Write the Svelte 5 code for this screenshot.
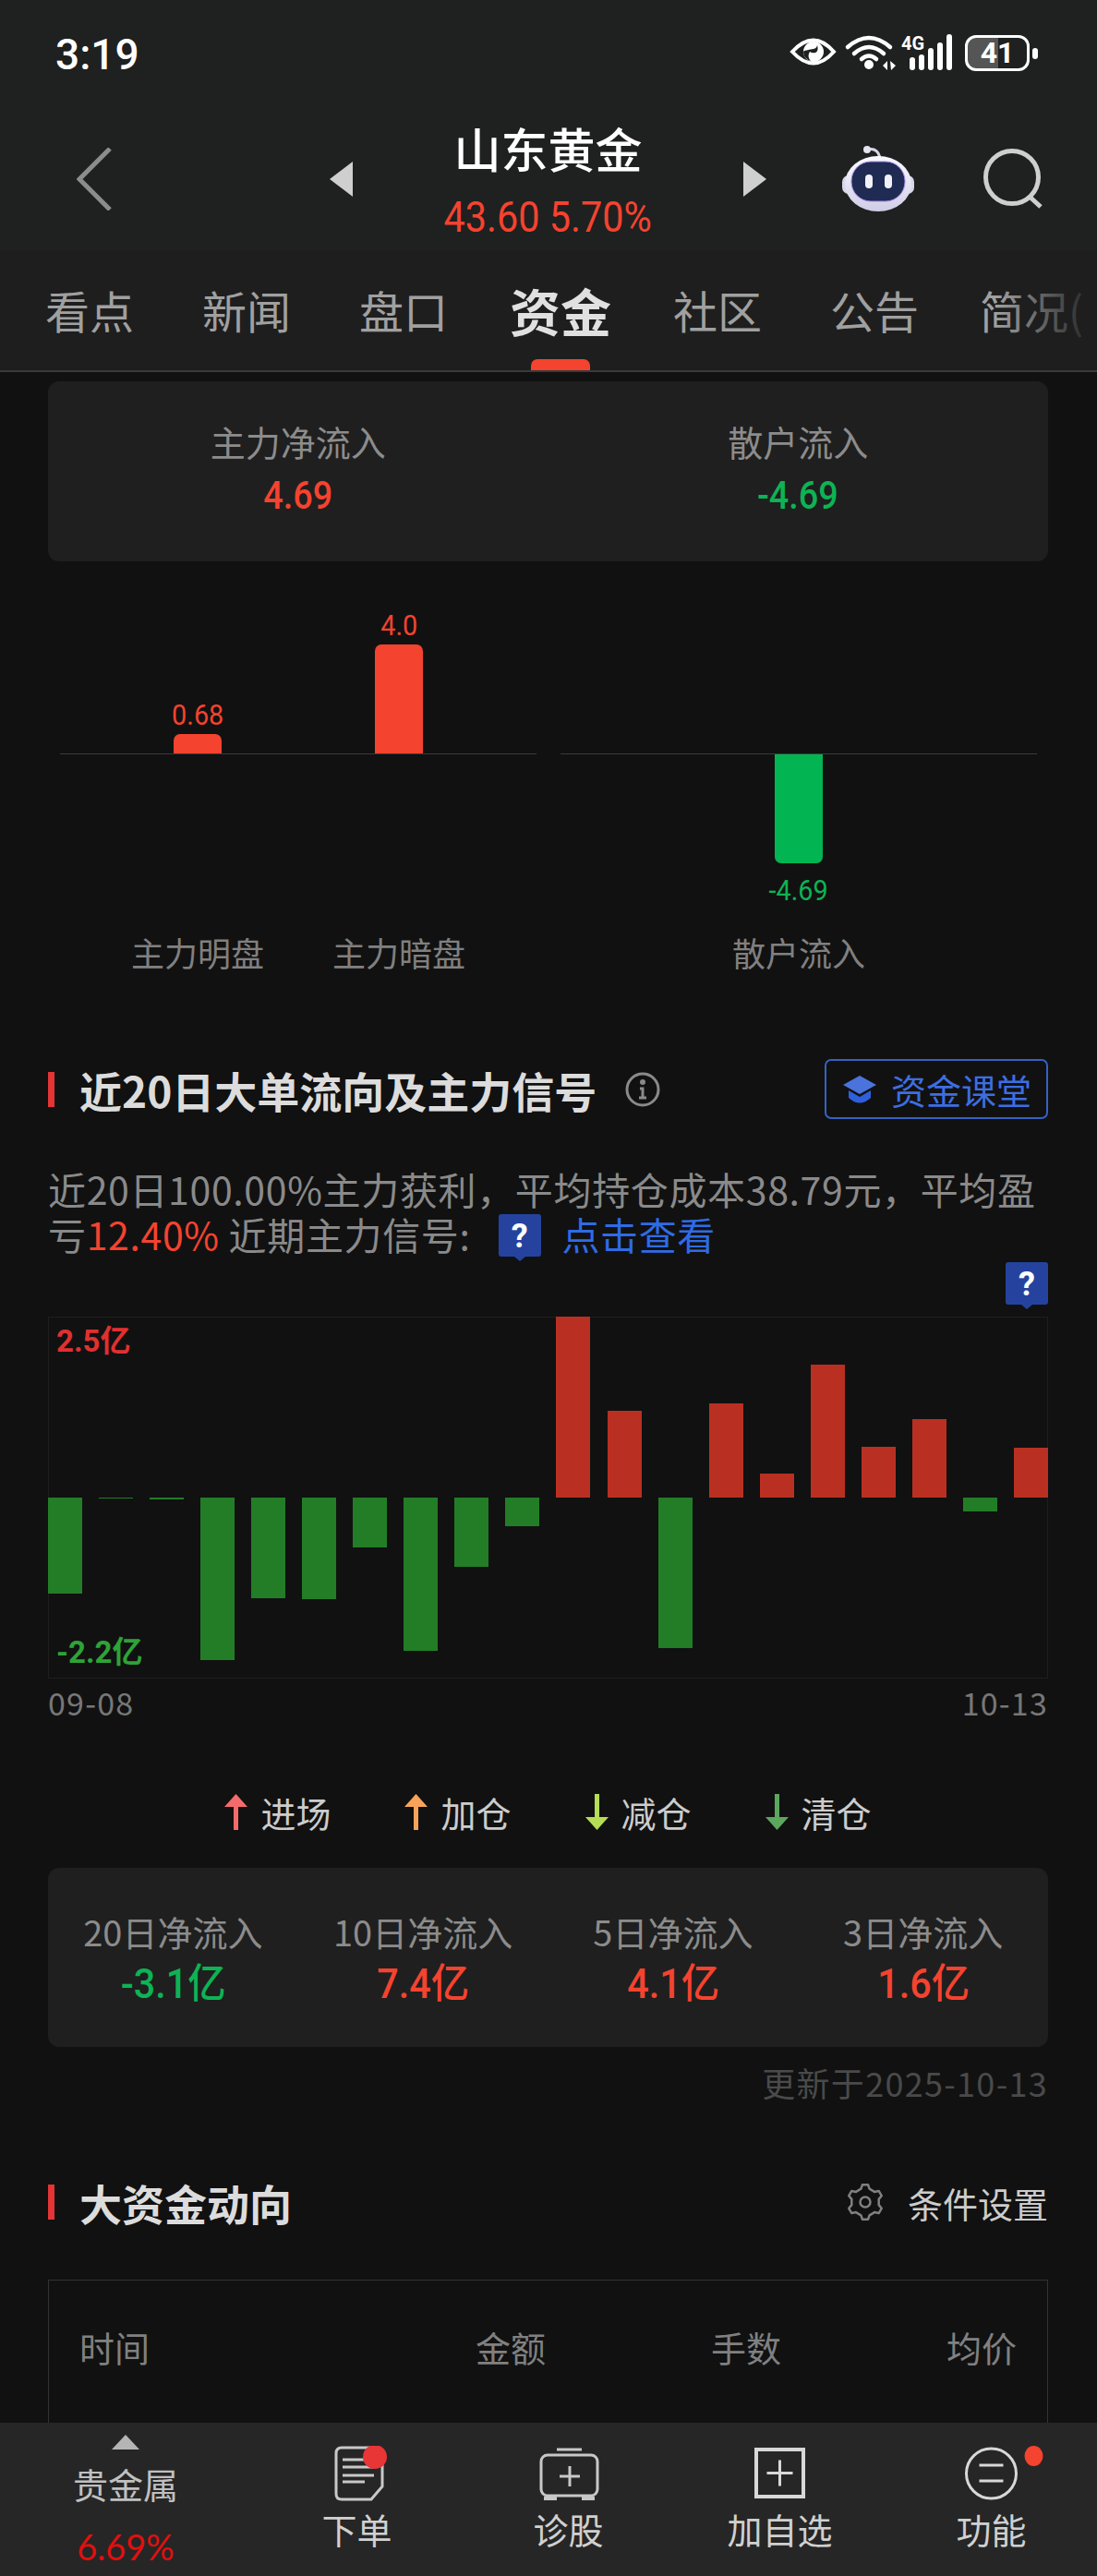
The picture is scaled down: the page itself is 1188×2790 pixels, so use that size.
<script>
  const tabs = ['看点', '新闻', '盘口', '资金', '社区', '公告', '简况('];

  const flowPanels = [
    { cols: [
      { name: '主力明盘', value: '0.68', h: 21, up: true },
      { name: '主力暗盘', value: '4.0', h: 118, up: true }
    ] },
    { cols: [{ name: '散户流入', value: '-4.69', h: 118, up: false }] }
  ];

  // positive = inflow, negative = outflow (px at chart scale)
  const bars = [-104, -1, -1.5, -176, -109, -110, -54, -166, -75, -31, 196, 94, -163, 102, 26, 144, 55, 85, -15, 54];

  const legend = [
    { label: '进场', color: '#f46b6b', up: true },
    { label: '加仓', color: '#f7a45a', up: true },
    { label: '减仓', color: '#b5dd55', up: false },
    { label: '清仓', color: '#5ba75d', up: false }
  ];

  const netFlows = [
    { label: '20日净流入', value: '-3.1亿', up: false },
    { label: '10日净流入', value: '7.4亿', up: true },
    { label: '5日净流入', value: '4.1亿', up: true },
    { label: '3日净流入', value: '1.6亿', up: true }
  ];

  function gearPath(cx, cy, outer, inner, teeth) {
    const pts = [];
    const step = (Math.PI * 2) / teeth;
    for (let i = 0; i < teeth; i++) {
      const a = i * step - Math.PI / 2;
      const spots = [[-0.3, inner], [-0.15, outer], [0.15, outer], [0.3, inner]];
      for (const [off, r] of spots) {
        const t = a + off * step;
        pts.push((cx + Math.cos(t) * r).toFixed(1) + ' ' + (cy + Math.sin(t) * r).toFixed(1));
      }
    }
    return 'M' + pts.join('L') + 'Z';
  }
</script>

<div class="app">
  <header class="top">
    <div class="status">
      <span class="time">3:19</span>
      <svg class="status-icons" width="176" height="40" viewBox="0 0 176 40" fill="none">
        <path d="M2 19Q25-6 47 19Q25 44 2 19Z" stroke="#fff" stroke-width="4" fill="#1f2020" />
        <circle cx="25" cy="19" r="11" fill="#fff" />
        <path d="M14 19a11 11 0 0 0 8 10c-3-3-3-7-1-10a7 7 0 0 0 6 1c3-1 3-5 2-8a5 5 0 0 1-4 4c-4 1-9 1-11 3Z" fill="#1f2020" />
        <path d="M62 14Q85-6 108 14" stroke="#fff" stroke-width="4.5" stroke-linecap="round" />
        <path d="M69 21Q85 7 101 21" stroke="#fff" stroke-width="4.5" stroke-linecap="round" />
        <path d="M77 27Q85 20 93 27" stroke="#fff" stroke-width="4.5" stroke-linecap="round" />
        <circle cx="85" cy="33" r="5" fill="#fff" />
        <path d="M100 34l5-5v10zM108 29l6 5-5 5z" fill="#fff" />
        <text x="120" y="17" class="g4">4G</text>
        <rect x="129" y="25" width="6" height="14" rx="3" fill="#fff" />
        <rect x="139" y="22" width="6" height="17" rx="3" fill="#fff" />
        <rect x="149" y="15" width="6" height="24" rx="3" fill="#fff" />
        <rect x="159" y="9" width="6" height="30" rx="3" fill="#fff" />
        <rect x="169" y="0" width="6" height="39" rx="3" fill="#fff" />
      </svg>
      <div class="battery"><span>41</span></div>
      <i class="battery-nub"></i>
    </div>

    <div class="nav">
      <svg class="chevron" width="38" height="68" viewBox="0 0 38 68" fill="none">
        <path d="M36 1L3 34L36 67" stroke="#8c8c8c" stroke-width="5" />
      </svg>
      <svg class="tri-left" width="25" height="38" viewBox="0 0 25 38"><path d="M25 0V38L0 19Z" fill="#cfcfcf" /></svg>
      <div class="stock">
        <div class="stock-name">山东黄金</div>
        <div class="stock-price"><span class="num">43.60 5.70%</span></div>
      </div>
      <svg width="25" height="38" viewBox="0 0 25 38"><path d="M0 0V38L25 19Z" fill="#cfcfcf" /></svg>
      <svg class="robot" width="78" height="72" viewBox="0 0 78 72" fill="none">
        <defs>
          <linearGradient id="shell" x1="0" y1="0" x2="0" y2="1">
            <stop offset="0" stop-color="#fbfaff" />
            <stop offset="1" stop-color="#cfcde6" />
          </linearGradient>
        </defs>
        <path d="M28 4C36 2 40 7 41 14" stroke="#d8d6e6" stroke-width="3" />
        <circle cx="27" cy="4" r="4" fill="#e6e4f0" />
        <rect x="0" y="32" width="78" height="20" rx="7" fill="#d9d7ea" />
        <ellipse cx="39" cy="41" rx="36" ry="30" fill="url(#shell)" />
        <rect x="10" y="17" width="58" height="43" rx="21" fill="#1f2b52" stroke="#a98be8" stroke-width="1" />
        <rect x="25" y="31" width="8" height="15" rx="4" fill="#f2f1fa" />
        <rect x="46" y="31" width="8" height="15" rx="4" fill="#f2f1fa" />
      </svg>
      <svg class="search" width="66" height="66" viewBox="0 0 66 66" fill="none">
        <circle cx="31" cy="31" r="28.5" stroke="#cfcfcf" stroke-width="5" />
        <path d="M50 52L62 63" stroke="#cfcfcf" stroke-width="5" />
      </svg>
    </div>
  </header>

  <nav class="tabs">
    {#each tabs as tab}
      <div class="tab" class:active={tab === '资金'}>
        <span>{tab}</span>
        {#if tab === '资金'}<i class="tab-mark"></i>{/if}
      </div>
    {/each}
  </nav>

  <main class="main">
    <section class="card split">
      <div class="stat">
        <div class="stat-label">主力净流入</div>
        <div class="stat-value red"><span class="num">4.69</span></div>
      </div>
      <div class="stat">
        <div class="stat-label">散户流入</div>
        <div class="stat-value green"><span class="num">-4.69</span></div>
      </div>
    </section>

    <section class="flow">
      {#each flowPanels as panel}
        <div class="panel">
          <div class="zone-up">
            {#each panel.cols as col}
              <div class="slot">
                {#if col.up}
                  <span class="bar-val red num">{col.value}</span>
                  <i class="bar-up" style="height: {col.h}px"></i>
                {/if}
              </div>
            {/each}
          </div>
          <div class="zone-down">
            {#each panel.cols as col}
              <div class="slot">
                {#if !col.up}
                  <i class="bar-down" style="height: {col.h}px"></i>
                  <span class="bar-val green below num">{col.value}</span>
                {/if}
              </div>
            {/each}
          </div>
          <div class="names">
            {#each panel.cols as col}
              <div class="slot">{col.name}</div>
            {/each}
          </div>
        </div>
      {/each}
    </section>

    <div class="head first">
      <i class="head-bar"></i>
      <h2>近20日大单流向及主力信号</h2>
      <svg class="info" width="38" height="38" viewBox="0 0 38 38" fill="none" stroke="#8a8a8a" stroke-width="3">
        <circle cx="19" cy="19" r="17" />
        <circle cx="19" cy="11" r="3" fill="#8a8a8a" stroke="none" />
        <path d="M16 18h3v10M15 28h8" />
      </svg>
      <div class="class-btn">
        <svg width="36" height="32" viewBox="0 0 36 32">
          <path d="M18 1L36 11L18 21L0 11Z" fill="#4a74dc" />
          <path d="M6 17L18 24L30 17V25Q18 36 6 25Z" fill="#2f5fdc" />
        </svg>
        <span>资金课堂</span>
      </div>
    </div>

    <p class="summary">近20日100.00%主力获利，平均持仓成本38.79元，平均盈亏<span class="red">12.40%</span> 近期主力信号: <svg class="q inline" width="46" height="51" viewBox="0 0 46 51"><path d="M3 0H43Q46 0 46 3V43Q46 46 43 46H29L23 51L17 46H3Q0 46 0 43V3Q0 0 3 0Z" fill="#25439e" /><text x="23" y="36" class="q-mark">?</text></svg><span class="link">点击查看</span></p>

    <div class="signal-row">
      <svg class="q" width="46" height="51" viewBox="0 0 46 51"><path d="M3 0H43Q46 0 46 3V43Q46 46 43 46H29L23 51L17 46H3Q0 46 0 43V3Q0 0 3 0Z" fill="#25439e" /><text x="23" y="36" class="q-mark">?</text></svg>
    </div>

    <div class="chart">
      <span class="chart-max">2.5亿</span>
      <span class="chart-min">-2.2亿</span>
      {#each bars as v}
        <div class="chart-col">
          <div class="chart-up">{#if v > 0}<i style="height: {v}px"></i>{/if}</div>
          <div class="chart-down">{#if v < 0}<i style="height: {-v}px"></i>{/if}</div>
        </div>
      {/each}
    </div>

    <div class="dates"><span>09-08</span><span>10-13</span></div>

    <div class="legend">
      {#each legend as item}
        <div class="legend-item">
          <svg width="25" height="39" viewBox="0 0 25 39" fill={item.color}>
            {#if item.up}
              <path d="M12.5 0L25 14H15V39H10V14H0Z" />
            {:else}
              <path d="M12.5 39L25 25H15V0H10V25H0Z" />
            {/if}
          </svg>
          <span>{item.label}</span>
        </div>
      {/each}
    </div>

    <section class="card net">
      {#each netFlows as item}
        <div class="stat">
          <div class="stat-label">{item.label}</div>
          <div class="stat-value" class:red={item.up} class:green={!item.up}><span class="num">{item.value}</span></div>
        </div>
      {/each}
    </section>

    <div class="updated">更新于2025-10-13</div>

    <div class="head second">
      <i class="head-bar"></i>
      <h2>大资金动向</h2>
      <div class="settings">
        <svg width="40" height="40" viewBox="0 0 40 40" fill="none" stroke="#808080" stroke-width="2.5" stroke-linejoin="round">
          <path d={gearPath(20, 20, 19, 15, 6)} />
          <circle cx="20" cy="20" r="5.5" />
        </svg>
        <span>条件设置</span>
      </div>
    </div>

    <div class="table">
      <div class="table-head">
        <span>时间</span>
        <span>金额</span>
        <span>手数</span>
        <span>均价</span>
      </div>
    </div>
  </main>

  <footer class="bottom">
    <div class="sector">
      <i class="sector-tri"></i>
      <div class="sector-name">贵金属</div>
      <div class="sector-pct">6.69%</div>
    </div>
    <div class="action">
      <svg width="80" height="60" viewBox="0 0 80 60" fill="none" stroke="#c8c8c8" stroke-width="3">
        <path d="M23 2H61Q67 2 67 8V44L55 58H23Q17 58 17 52V8Q17 2 23 2Z" />
        <path d="M24 15H58M24 23H58M24 32H58M24 39H48" />
        <ellipse cx="59" cy="12" rx="13" ry="13" fill="#e83535" stroke="none" />
      </svg>
      <span>下单</span>
    </div>
    <div class="action">
      <svg width="80" height="60" viewBox="0 0 80 60" fill="none" stroke="#c8c8c8" stroke-width="3">
        <path d="M27 4H54" />
        <rect x="10" y="10" width="61" height="44" rx="7" />
        <path d="M30 33H52M41 22V44" />
        <path d="M13 55H27V59H13ZM54 55H68V59H54Z" fill="#c8c8c8" stroke="none" />
      </svg>
      <span>诊股</span>
    </div>
    <div class="action">
      <svg width="80" height="60" viewBox="0 0 80 60" fill="none" stroke="#d8d8d8">
        <rect x="14" y="4" width="51" height="51" stroke-width="4" />
        <path d="M25.5 29.5H53.5M39.5 15.5V43.5" stroke-width="3" />
      </svg>
      <span>加自选</span>
    </div>
    <div class="action">
      <svg class="overflow" width="80" height="60" viewBox="0 0 80 60" fill="none" stroke="#d8d8d8" stroke-width="3">
        <ellipse cx="39.5" cy="30" rx="27" ry="27" />
        <path d="M26.5 21H52.5M26.5 38H52.5" />
        <ellipse cx="85.5" cy="11" rx="10" ry="11" fill="#f4432f" stroke="none" />
      </svg>
      <span>功能</span>
    </div>
  </footer>
</div>

<style>
  :global(body) {
    margin: 0;
    background: #111;
  }
  .app {
    width: 1188px;
    height: 2790px;
    display: flex;
    flex-direction: column;
    overflow: hidden;
    background: #111;
    font-family: "Noto Sans CJK SC", sans-serif;
  }
  .red { color: #f4432f; }
  .green { color: #0db354; }
  /* the app's numerals are a narrow face, Roboto squeezed comes closest */
  .num {
    display: inline-block;
    transform: scaleX(0.9);
  }

  /* header */
  .top { background: #1f2020; height: 272px; }
  .status {
    height: 108px;
    display: flex;
    align-items: flex-start;
    padding-left: 60px;
  }
  .time {
    font: 500 46px/46px Roboto, sans-serif;
    color: #fff;
    margin-top: 36px;
    width: 796px;
  }
  .status-icons { margin-top: 37px; overflow: visible; }
  .g4 { font: 700 20px Roboto, sans-serif; fill: #fff; }
  .battery {
    box-sizing: border-box;
    width: 70px;
    height: 39px;
    margin: 38px 0 0 13px;
    border: 3px solid #fff;
    border-radius: 12px;
    background: linear-gradient(to right, #555 51%, transparent 51%);
    display: flex;
    align-items: center;
    justify-content: center;
    color: #fff;
    font: 700 32px/33px Roboto, sans-serif;
  }
  .battery-nub {
    width: 6px;
    height: 12px;
    margin: 52px 0 0 3px;
    background: #fff;
    border-radius: 3px;
  }
  .nav {
    box-sizing: border-box;
    height: 164px;
    padding: 8px 0 0 83px;
    display: flex;
    align-items: center;
  }
  .tri-left { margin-left: 236px; }
  .stock {
    width: 423px;
    text-align: center;
  }
  .stock-name {
    color: #fff;
    font-size: 51px;
    font-weight: 500;
    line-height: 64px;
    margin-top: -2px;
  }
  .stock-price {
    color: #f4432f;
    font: 46px/48px Roboto, sans-serif;
    margin-top: 19px;
  }
  .robot { margin-left: 82px; }
  .search { margin-left: 75px; }

  /* tabs */
  .tabs {
    position: relative;
    box-sizing: border-box;
    height: 131px;
    padding-left: 12px;
    display: flex;
    overflow: hidden;
    background: #1e1e1e;
    border-bottom: 2px solid #3a3a3a;
  }
  .tabs::after {
    content: "";
    position: absolute;
    top: 0;
    right: 0;
    bottom: 0;
    width: 110px;
    background: linear-gradient(to right, rgba(30, 30, 30, 0), #1e1e1e);
  }
  .tab {
    flex: 0 0 170px;
    display: flex;
    flex-direction: column;
    align-items: center;
    padding-top: 37px;
    font-size: 48px;
    line-height: 52px;
    color: #a0a0a0;
    white-space: nowrap;
  }
  .tab.active {
    font-size: 55px;
    font-weight: 700;
    color: #e0e0e0;
  }
  .tab-mark {
    width: 64px;
    height: 13px;
    margin-top: 28px;
    background: #f4432f;
    border-radius: 7px 7px 0 0;
  }

  /* content */
  .main {
    flex: 1;
    min-height: 0;
    overflow: hidden;
    padding: 10px 53px 0 52px;
  }
  .card {
    background: #1f1f1f;
    border-radius: 12px;
    display: grid;
  }
  .split {
    height: 195px;
    grid-template-columns: 1fr 1fr;
    padding-top: 39px;
    box-sizing: border-box;
  }
  .stat { text-align: center; }
  .stat-label {
    font-size: 38px;
    line-height: 52px;
    color: #8c8c8c;
  }
  .stat-value {
    font: 500 42px/52px Roboto, "Noto Sans CJK SC", sans-serif;
    margin-top: 7px;
  }

  .flow {
    display: grid;
    grid-template-columns: 516px 516px;
    column-gap: 26px;
    padding: 32px 13px 0;
  }
  .zone-up, .zone-down, .names { display: flex; justify-content: center; }
  .zone-up {
    height: 177px;
    border-bottom: 1px solid #3a3a3a;
    box-sizing: border-box;
  }
  .panel:first-child .zone-up,
  .panel:first-child .zone-down,
  .panel:first-child .names {
    justify-content: flex-start;
    padding-left: 40px;
  }
  .slot {
    flex: 0 0 218px;
    display: flex;
    flex-direction: column;
    align-items: center;
  }
  .zone-up .slot { justify-content: flex-end; }
  .zone-down { height: 190px; }
  .bar-val {
    font: 32px/36px Roboto, sans-serif;
    margin-bottom: 3px;
  }
  .bar-val.below { margin: 11px 0 0; }
  .bar-up, .bar-down { width: 52px; }
  .bar-up { background: #f4432f; border-radius: 7px 7px 0 0; }
  .bar-down { background: #03b552; border-radius: 0 0 7px 7px; }
  .names .slot {
    font-size: 36px;
    line-height: 48px;
    color: #808080;
  }

  .head {
    display: flex;
    align-items: center;
  }
  .head.first { margin-top: 92px; height: 65px; }
  .head.second { margin-top: 82px; height: 50px; }
  .head-bar {
    width: 7px;
    height: 38px;
    margin-right: 27px;
    background: #e33535;
  }
  h2 {
    margin: 0;
    font-size: 46px;
    font-weight: 700;
    line-height: 50px;
    color: #dcdcdc;
  }
  .info { margin-left: 31px; }
  .class-btn {
    box-sizing: border-box;
    margin-left: auto;
    width: 242px;
    height: 65px;
    display: flex;
    align-items: center;
    gap: 16px;
    padding-left: 18px;
    border: 2px solid #3561c4;
    border-radius: 7px;
    color: #3d6ee0;
    font-size: 38px;
    white-space: nowrap;
  }

  .summary {
    margin: 51px 0 0;
    font-size: 41px;
    line-height: 49px;
    letter-spacing: 0.65px;
    color: #8a8a8a;
  }
  .q { display: block; }
  .q.inline {
    display: inline-block;
    vertical-align: -6px;
    margin: -6px 22px -6px 21px;
  }
  .q-mark {
    font: 700 36px Roboto, sans-serif;
    fill: #fff;
    text-anchor: middle;
  }
  .link { color: #2f6be6; }
  .signal-row {
    display: flex;
    justify-content: flex-end;
    margin-top: 6px;
  }

  .chart {
    position: relative;
    height: 392px;
    margin-top: 8px;
    display: flex;
    justify-content: space-between;
    box-shadow: inset 0 0 0 1px #1e1e1e;
  }
  .chart-col { width: 37px; }
  .chart-up, .chart-down { height: 196px; display: flex; }
  .chart-up { align-items: flex-end; }
  .chart-down { align-items: flex-start; }
  .chart-up i { width: 100%; background: #b93022; }
  .chart-down i { width: 100%; background: #237d27; }
  .chart-max, .chart-min {
    position: absolute;
    left: 9px;
    font: 700 33px/40px Roboto, "Noto Sans CJK SC", sans-serif;
  }
  .chart-max { top: 7px; color: #e03030; }
  .chart-min { bottom: 8px; color: #2ea336; }

  .dates {
    display: flex;
    justify-content: space-between;
    margin-top: 6px;
    font-size: 34px;
    line-height: 40px;
    letter-spacing: 1.2px;
    color: #777;
  }

  .legend {
    display: flex;
    justify-content: center;
    gap: 80px;
    margin-top: 73px;
    height: 50px;
  }
  .legend-item {
    display: flex;
    align-items: center;
    gap: 14px;
    font-size: 38px;
    color: #ccc;
  }

  .net {
    grid-template-columns: repeat(4, 1fr);
    box-sizing: border-box;
    height: 194px;
    margin-top: 36px;
    padding-top: 44px;
  }
  .net .stat-label { line-height: 50px; }
  .net .stat-value { font-size: 44px; margin-top: 6px; }
  .net .num { transform: scaleX(0.94); }

  .updated {
    margin-top: 15px;
    text-align: right;
    font-size: 36px;
    line-height: 46px;
    letter-spacing: 1.3px;
    color: #4a4a4a;
  }

  .settings {
    margin-left: auto;
    display: flex;
    align-items: center;
    gap: 26px;
    font-size: 38px;
    color: #ccc;
  }

  .table {
    margin-top: 59px;
    height: 400px;
    border: 1px solid #333;
    box-sizing: border-box;
  }
  .table-head {
    display: grid;
    grid-template-columns: 1fr 255px 255px 255px;
    padding: 47px 33px 0;
    font-size: 38px;
    line-height: 50px;
    color: #808080;
  }
  .table-head span { text-align: right; }
  .table-head span:first-child { text-align: left; }

  /* bottom bar */
  .bottom {
    flex: 0 0 166px;
    display: grid;
    grid-template-columns: 272px repeat(4, 229px);
    background: #262626;
  }
  .sector {
    display: flex;
    flex-direction: column;
    align-items: center;
    padding-top: 13px;
  }
  .sector-tri {
    width: 0;
    height: 0;
    border-left: 15px solid transparent;
    border-right: 15px solid transparent;
    border-bottom: 16px solid #b5b5b5;
  }
  .sector-name {
    margin-top: 12px;
    font-size: 38px;
    line-height: 50px;
    color: #c0c0c0;
  }
  .sector-pct {
    margin-top: 20px;
    font: 38px/46px Lato, sans-serif;
    color: #e0100f;
  }
  .action {
    display: flex;
    flex-direction: column;
    align-items: center;
    padding-top: 25px;
    font-size: 38px;
    line-height: 50px;
    color: #d0d0d0;
  }
  .action svg { margin-bottom: 5px; }
  .overflow { overflow: visible; }
</style>
